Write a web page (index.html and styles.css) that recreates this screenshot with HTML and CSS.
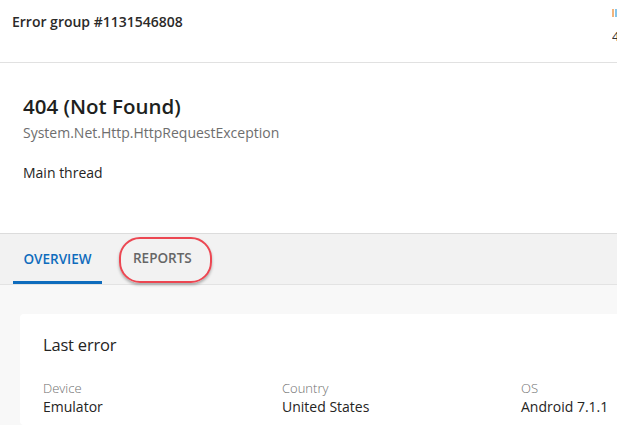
FILE: index.html
```html
<!DOCTYPE html>
<html>
<head>
<meta charset="utf-8">
<link rel="stylesheet" href="styles.css">
</head>
<body>
<header class="topbar">
  <div class="title">Error group #1131546808</div>
  <div class="corner">
    <div class="bars"><span class="b1"></span><span class="b2"></span></div>
    <div class="cnum">4</div>
  </div>
</header>
<section class="summary">
  <h1 class="err">404 (Not Found)</h1>
  <div class="exc">System.Net.Http.HttpRequestException</div>
  <div class="thread">Main thread</div>
</section>
<nav class="tabs">
  <div class="tab active">OVERVIEW</div>
  <div class="tab highlighted">REPORTS</div>
</nav>
<main class="content">
  <div class="card">
    <h2 class="card-title">Last error</h2>
    <div class="props">
      <div class="prop"><div class="label">Device</div><div class="value">Emulator</div></div>
      <div class="prop"><div class="label">Country</div><div class="value">United States</div></div>
      <div class="prop"><div class="label">OS</div><div class="value">Android 7.1.1</div></div>
    </div>
  </div>
</main>
</body>
</html>
```
FILE: styles.css
```css
* { box-sizing: border-box; }
html, body { margin: 0; padding: 0; }
body {
  width: 617px;
  height: 425px;
  overflow: hidden;
  font-family: "Open Sans", "Noto Sans", sans-serif;
  color: #323130;
  background: #f8f8f8;
}
.topbar {
  height: 63px;
  background: #fff;
  border-bottom: 1px solid #e1e1e1;
  display: flex;
  justify-content: space-between;
  padding-left: 12px;
}
.title {
  font-size: 14px;
  font-weight: 600;
  margin-top: 12px;
  line-height: 20px;
  color: #2b2a29;
}
.corner {
  width: 5px;
  padding-top: 9px;
  display: flex;
  flex-direction: column;
  overflow: hidden;
}
.bars { display: flex; gap: 1px; height: 8px; }
.bars span { width: 2px; height: 8px; display: block; flex: none; }
.b1 { background: #f2b47c; }
.b2 { background: #86c5ea; }
.cnum { font-size: 13px; line-height: 14px; margin-top: 12px; color: #333; }
.summary {
  height: 171px;
  background: #fff;
  border-bottom: 1px solid #dcdcdc;
  padding: 30px 23px 0;
}
.err {
  margin: 0;
  font-size: 20.5px;
  font-weight: 600;
  line-height: 26px;
  color: #201f1e;
}
.exc {
  margin-top: 4px;
  font-size: 14px;
  color: #6e6e6e;
  line-height: 20px;
}
.thread {
  margin-top: 20px;
  font-size: 14px;
  line-height: 20px;
  color: #252423;
}
.tabs {
  height: 51px;
  background: #f2f2f2;
  border-bottom: 1px solid #e3e3e3;
  display: flex;
  padding-left: 13px;
  gap: 17px;
}
.tab {
  font-size: 13.5px;
  font-weight: 600;
  display: flex;
  align-items: center;
  color: #666;
  position: relative;
}
.tab.active {
  color: #0f6cbd;
  border-bottom: 3px solid #0f6cbd;
  padding-top: 3px;
  width: 89px;
  justify-content: center;
}
.tab.highlighted {
  padding: 0 17px 2px 14px;
}
.tab.highlighted::after {
  content: "";
  position: absolute;
  left: 0;
  top: 3px;
  width: 89px;
  height: 42px;
  border: 2.5px solid #ec4752;
  border-radius: 21px;
  box-shadow: 0 2px 3px rgba(0,0,0,0.3);
}
.content {
  padding: 29px 0 0 20px;
}
.card {
  background: #fff;
  border-radius: 4px 0 0 4px;
  height: 111px;
  padding: 20px 23px 0;
}
.card-title {
  margin: 0;
  font-size: 16.5px;
  font-weight: 400;
  line-height: 22px;
  letter-spacing: -0.2px;
  color: #252423;
}
.props {
  display: grid;
  grid-template-columns: 239px 239px 120px;
  margin-top: 23px;
}
.label {
  font-size: 13px;
  color: #707070;
  line-height: 18px;
  font-weight: 300;
}
.value {
  font-size: 14px;
  line-height: 20px;
  color: #252423;
}
```
